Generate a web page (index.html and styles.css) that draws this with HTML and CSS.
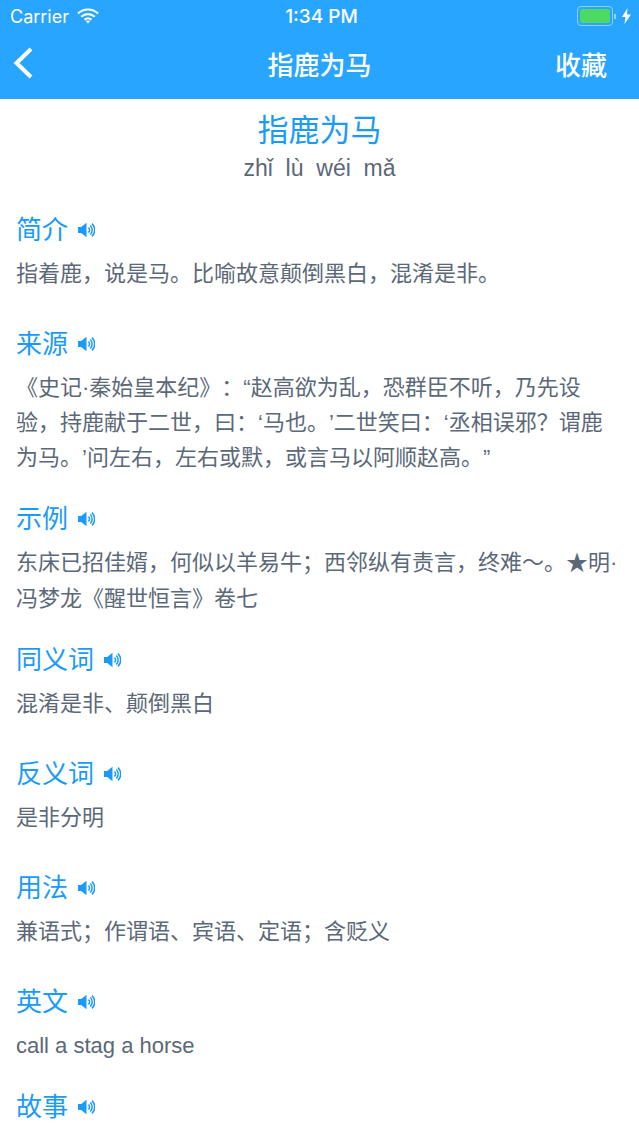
FILE: index.html
```html
<!DOCTYPE html>
<html lang="zh-CN">
<head>
    <meta charset="UTF-8">
    <meta name="viewport" content="width=device-width, initial-scale=1.0">
    <title>指鹿为马</title>
    <link rel="stylesheet" href="styles.css">
</head>
<body>
    <svg class="defs" width="0" height="0">
        <symbol id="sound" viewBox="0 0 18 18">
            <path d="M1 6h3.200L9.500 1.800v14.400L4.200 12H1z" fill="currentColor"/>
            <path d="M11.500 6.500a3.500 3.500 0 0 1 0 5M13.300 4.500a6.300 6.300 0 0 1 0 9M15 2.600a9 9 0 0 1 0 12.800" fill="none" stroke="currentColor" stroke-width="1.500"/>
        </symbol>
    </svg>
    <div class="header">
        <div class="status-bar">
            <div class="status-left">
                <span>Carrier</span>
                <svg class="wifi" width="22" height="16" viewBox="0 0 22 16">
                    <path d="M1 5.500a14.500 14.500 0 0 1 20 0M4.300 8.800a9.800 9.800 0 0 1 13.400 0M7.500 11.800a5.200 5.200 0 0 1 7 0" fill="none" stroke="#fff" stroke-width="2.200"/>
                    <path d="M8.800 13.300a3.200 3.200 0 0 1 4.400 0L11 15.600z" fill="#fff"/>
                </svg>
            </div>
            <div class="status-time">1:34 PM</div>
            <div class="status-right">
                <div class="battery"><div class="battery-fill"></div></div>
                <div class="battery-tip"></div>
                <svg width="9" height="16" viewBox="0 0 9 16"><path d="M5.500 0L0 9h3.500L2.500 16 9 6.500H5z" fill="#fff"/></svg>
            </div>
        </div>
        <div class="nav-bar">
            <svg class="back" width="22" height="34" viewBox="0 0 22 34"><path d="M19 3L4.500 17 19 31" fill="none" stroke="#fff" stroke-width="4"/></svg>
            <div class="nav-title">指鹿为马</div>
            <div class="nav-action">收藏</div>
        </div>
    </div>
    <div class="content">
        <div class="idiom">
            <h1>指鹿为马</h1>
            <div class="pinyin">zhǐ&nbsp; lù&nbsp; wéi&nbsp; mǎ</div>
        </div>
        <div class="section">
            <h2>简介 <svg class="sound"><use href="#sound"/></svg></h2>
            <p class="tall">指着鹿，说是马。比喻故意颠倒黑白，混淆是非。</p>
        </div>
        <div class="section">
            <h2>来源 <svg class="sound"><use href="#sound"/></svg></h2>
            <p>《史记·秦始皇本纪》：“赵高欲为乱，恐群臣不听，乃先设验，持鹿献于二世，曰：‘马也。’二世笑曰：‘丞相误邪？谓鹿为马。’问左右，左右或默，或言马以阿顺赵高。”</p>
        </div>
        <div class="section">
            <h2>示例 <svg class="sound"><use href="#sound"/></svg></h2>
            <p>东床已招佳婿，何似以羊易牛；西邻纵有责言，终难～。★明·冯梦龙《醒世恒言》卷七</p>
        </div>
        <div class="section">
            <h2>同义词 <svg class="sound"><use href="#sound"/></svg></h2>
            <p class="tall">混淆是非、颠倒黑白</p>
        </div>
        <div class="section">
            <h2>反义词 <svg class="sound"><use href="#sound"/></svg></h2>
            <p class="tall">是非分明</p>
        </div>
        <div class="section">
            <h2>用法 <svg class="sound"><use href="#sound"/></svg></h2>
            <p class="tall">兼语式；作谓语、宾语、定语；含贬义</p>
        </div>
        <div class="section">
            <h2>英文 <svg class="sound"><use href="#sound"/></svg></h2>
            <p>call a stag a horse</p>
        </div>
        <div class="section">
            <h2>故事 <svg class="sound"><use href="#sound"/></svg></h2>
        </div>
    </div>
</body>
</html>
```

FILE: styles.css
```css
html, body {
    height: 1136px;
    overflow: hidden;
}
body {
    margin: 0;
    font-family: "Liberation Sans", "Noto Sans CJK SC", sans-serif;
    background-color: #fff;
    color: #5b6878;
    text-spacing-trim: space-all;
}
.defs {
    display: block;
}
.header {
    background-color: #28a6ff;
    color: #fff;
}
.status-bar {
    height: 32px;
    display: grid;
    grid-template-columns: 1fr auto 1fr;
    align-items: center;
    padding: 0 8px 0 10px;
    font-size: 18px;
    font-family: Inter, "Liberation Sans", sans-serif;
}
.status-time {
    font-size: 19px;
    font-weight: 500;
    margin-left: 2px;
}
.status-left {
    display: flex;
    align-items: center;
    gap: 8px;
}
.status-right {
    display: flex;
    align-items: center;
    justify-content: flex-end;
}
.battery {
    width: 30px;
    height: 14px;
    padding: 2px;
    border: 1px solid #8fd0ff;
    border-radius: 4px;
}
.battery-fill {
    height: 100%;
    background-color: #4cd964;
    border-radius: 2px;
}
.battery-tip {
    width: 2px;
    height: 5px;
    margin: 0 6px 0 1px;
    background-color: #8fd0ff;
}
.nav-bar {
    height: 62px;
    padding: 0 32px 5px;
    display: grid;
    grid-template-columns: 1fr auto 1fr;
    align-items: center;
    font-size: 26px;
    font-weight: 500;
}
.back {
    margin-left: -20px;
}
.nav-action {
    justify-self: end;
}
.content {
    padding: 0 16px;
}
.idiom {
    text-align: center;
    padding: 10px 0 2px;
}
.idiom h1 {
    margin: 0;
    font-size: 31px;
    font-weight: 400;
    line-height: 43px;
    color: #1a9bfc;
}
.pinyin {
    font-size: 23px;
    line-height: 32px;
}
.section {
    padding-top: 22.8px;
}
.section h2 {
    margin: -1px 0 4px;
    display: flex;
    align-items: center;
    gap: 9px;
    font-size: 26px;
    font-weight: 400;
    line-height: 44px;
    color: #1a9bfc;
}
.sound {
    width: 18px;
    height: 18px;
}
.section p {
    margin: 0;
    font-size: 22px;
    line-height: 35.2px;
}
.section p.tall {
    min-height: 44.4px;
}
```
